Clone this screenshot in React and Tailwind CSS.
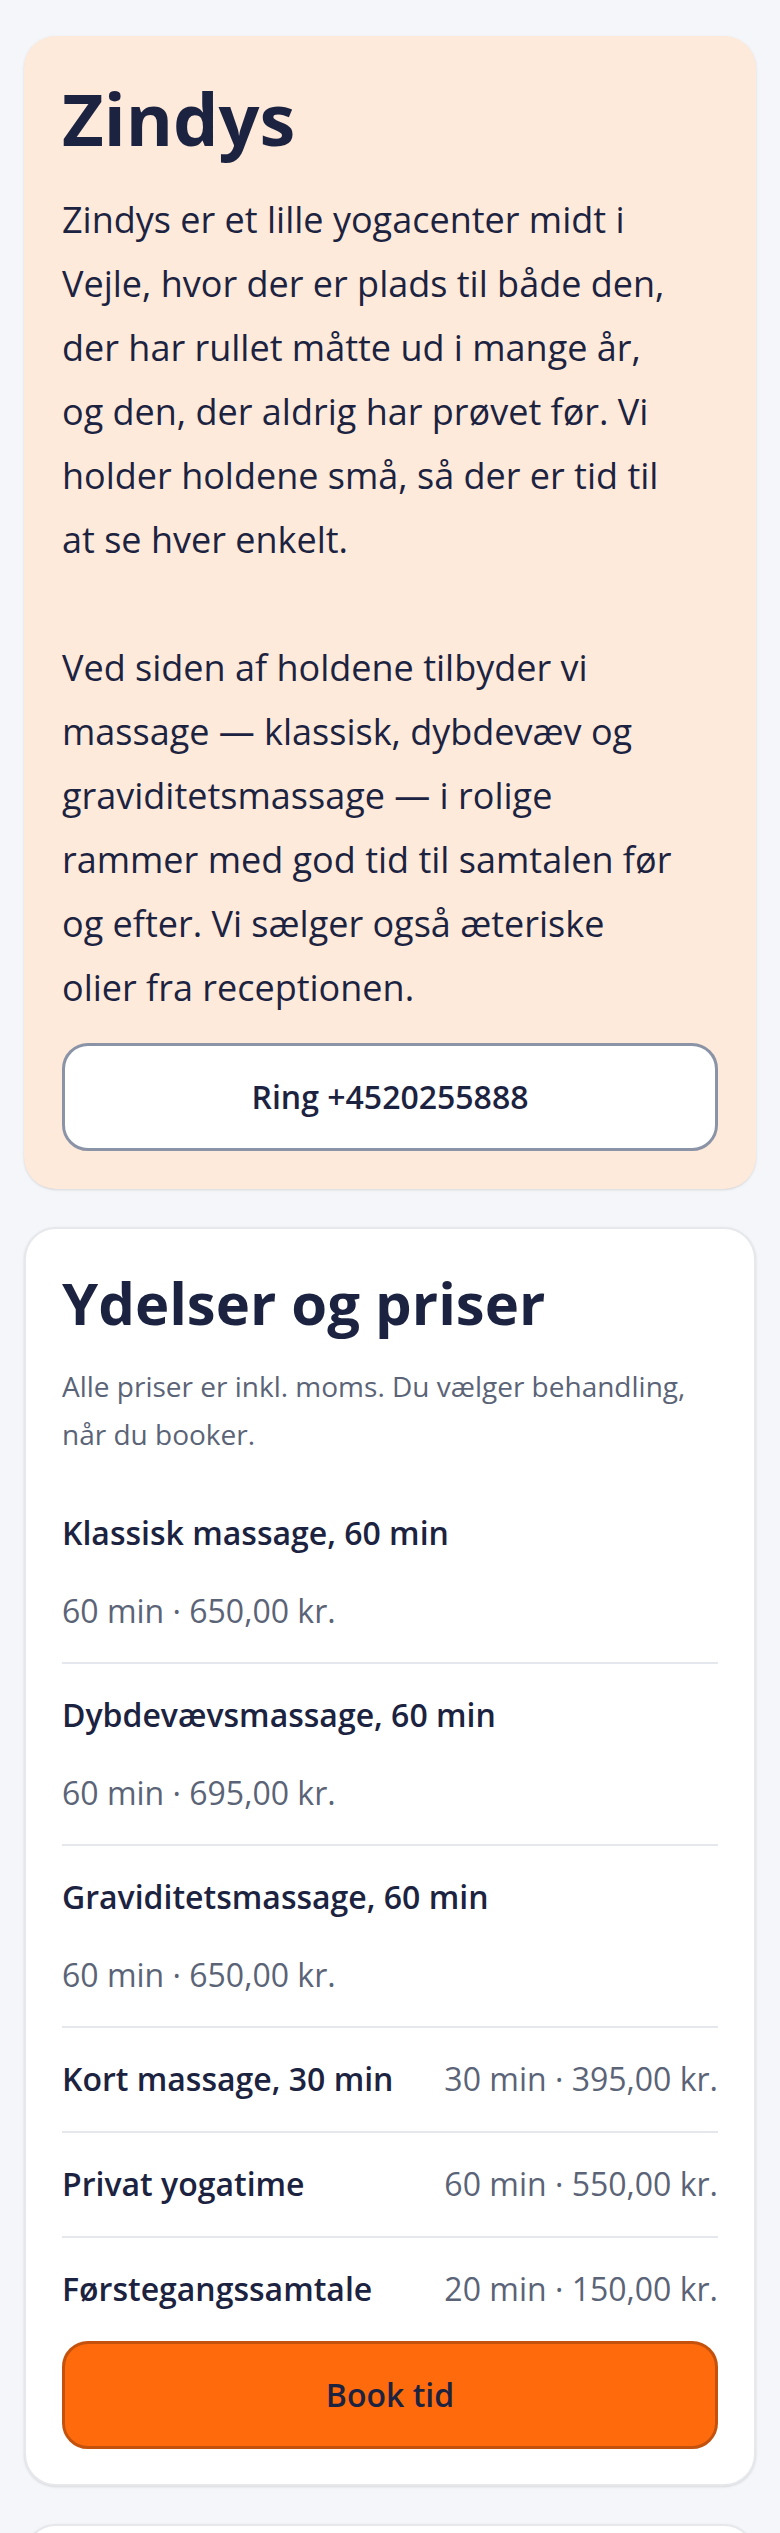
const services = [
  { name: "Klassisk massage, 60 min", price: "60 min · 650,00 kr.", stacked: true },
  { name: "Dybdevævsmassage, 60 min", price: "60 min · 695,00 kr.", stacked: true },
  { name: "Graviditetsmassage, 60 min", price: "60 min · 650,00 kr.", stacked: true },
  { name: "Kort massage, 30 min", price: "30 min · 395,00 kr." },
  { name: "Privat yogatime", price: "60 min · 550,00 kr." },
  { name: "Førstegangssamtale", price: "20 min · 150,00 kr." },
];

// line breaks kept as in the design
const intro = [
  [
    "Zindys er et lille yogacenter midt i",
    "Vejle, hvor der er plads til både den,",
    "der har rullet måtte ud i mange år,",
    "og den, der aldrig har prøvet før. Vi",
    "holder holdene små, så der er tid til",
    "at se hver enkelt.",
  ],
  [
    "Ved siden af holdene tilbyder vi",
    "massage — klassisk, dybdevæv og",
    "graviditetsmassage — i rolige",
    "rammer med god tid til samtalen før",
    "og efter. Vi sælger også æteriske",
    "olier fra receptionen.",
  ],
];

const ServiceRow = ({ item, last }) => {
  if (item.stacked) {
    return (
      <li className={`pt-[27px] pb-[27px] ${last ? "" : "border-b-2 border-[#e4e7eb]"}`}>
        <div className="text-[32px] leading-[48px] font-semibold text-[#1c2340]">{item.name}</div>
        <div className="mt-[30px] text-[32px] leading-[48px] text-[#5b6477]">{item.price}</div>
      </li>
    );
  }
  return (
    <li
      className={`flex items-center justify-between gap-4 pt-[27px] pb-[28px] ${
        last ? "" : "border-b-2 border-[#e4e7eb]"
      }`}
    >
      <span className="text-[32px] leading-[48px] font-semibold text-[#1c2340]">{item.name}</span>
      <span className="text-[32px] leading-[48px] text-[#5b6477] whitespace-nowrap">{item.price}</span>
    </li>
  );
};

export default function App() {
  return (
    <div
      className="min-h-screen bg-[#f5f6f9] px-[24px] pt-[36px] pb-[40px] flex flex-col gap-[38px]"
      style={{ fontFamily: '"Open Sans", "Noto Sans", sans-serif' }}
    >
      {/* Intro */}
      <section className="rounded-[32px] bg-[#feeadb] px-[38px] pt-[39px] pb-[38px] shadow-sm">
        <h1 className="text-[72px] leading-[1.2] font-bold text-[#1c2340]">Zindys</h1>
        <div className="mt-[27px] flex flex-col gap-[64px] text-[36px] leading-[64px] text-[#1c2340]">
          {intro.map((para, i) => (
            <p key={i}>
              {para.map((line, j) => (
                <span key={j} className="block whitespace-nowrap">
                  {line}
                </span>
              ))}
            </p>
          ))}
        </div>
        <button className="mt-[23px] w-full h-[108px] rounded-[26px] border-[3px] border-[#8b94a7] bg-white text-[32px] font-semibold text-[#1c2340]">
          Ring +4520255888
        </button>
      </section>

      {/* Services */}
      <section className="rounded-[32px] bg-white border-2 border-[#e6e8ec] px-[36px] pt-[39px] pb-[35px] shadow-sm">
        <h2 className="text-[58px] leading-[1.2] font-bold text-[#1c2340]">Ydelser og priser</h2>
        <p className="mt-[24px] text-[28px] leading-[48px] text-[#5b6477]">
          Alle priser er inkl. moms. Du vælger behandling, når du booker.
        </p>
        <ul className="mt-[24px]">
          {services.map((s, i) => (
            <ServiceRow key={s.name} item={s} last={i === services.length - 1} />
          ))}
        </ul>
        <button className="w-full h-[108px] rounded-[26px] border-[3px] border-[#c4520d] bg-[#ff6b0c] text-[32px] font-semibold text-[#1c2340]">
          Book tid
        </button>
      </section>

      {/* next section, only its top edge is in view */}
      <section className="h-[240px] rounded-[32px] bg-white border-2 border-[#e6e8ec] shadow-sm" />
    </div>
  );
}
